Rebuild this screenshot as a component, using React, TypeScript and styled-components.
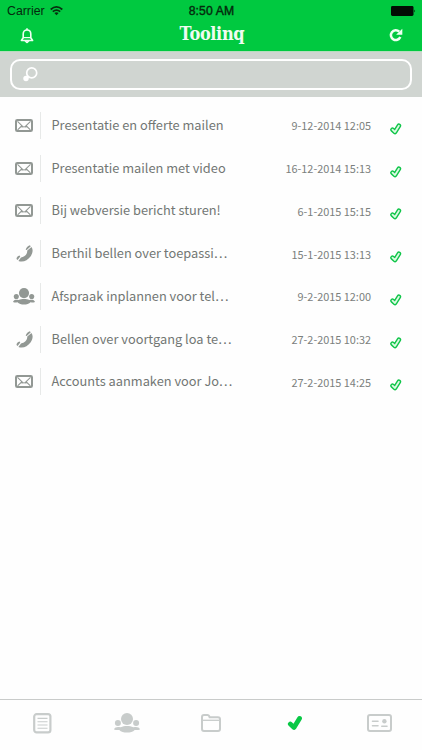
import React from "react";
import styled, { createGlobalStyle } from "styled-components";

const GREEN = "#00c940";
const GREY = "#929894";
const FAINT = "#c8cccb";

const GlobalStyle = createGlobalStyle`
  * { box-sizing: border-box; }
  body { margin: 0; background: #fefefe; }
`;

const Screen = styled.div`
  display: flex;
  flex-direction: column;
  width: 422px;
  height: 750px;
  overflow: hidden;
  background: #fefefe;
  font-family: "Noto Sans CJK JP", "Noto Sans", sans-serif;
  svg { display: block; flex: none; }
`;

const Header = styled.header`
  height: 51px;
  flex: none;
  background: ${GREEN};
`;

const StatusBar = styled.div`
  display: grid;
  grid-template-columns: 1fr auto 1fr;
  align-items: center;
  height: 22px;
  padding: 0 6px 0 7px;
  font: 12.3px/22px "Liberation Sans", sans-serif;
  color: #042a0d;
`;

const Carrier = styled.div`
  display: flex;
  align-items: center;
  gap: 6px;
`;

const CarrierName = styled.span`
  width: 37px;
  white-space: nowrap;
`;

const Clock = styled.span`
  font-size: 12.2px;
  -webkit-text-stroke: 0.4px #042a0d;
  letter-spacing: 0.12px;
`;

const BatterySlot = styled.div`
  justify-self: end;
`;

const TitleBar = styled.div`
  display: grid;
  grid-template-columns: 1fr auto 1fr;
  height: 29px;
  padding: 0 19px 0 20px;
`;

const HeaderAction = styled.button<{ $end?: boolean }>`
  justify-self: ${(p) => (p.$end ? "end" : "start")};
  align-self: start;
  padding: 6px 0 0;
  border: 0;
  background: none;
`;

const Title = styled.h1`
  margin: 0;
  color: #effcf1;
  font: 700 18px/23px "DejaVu Serif", serif;
  letter-spacing: -0.4px;
  transform: scaleX(0.9);
`;

const SearchArea = styled.div`
  height: 46px;
  flex: none;
  padding: 7px 10px 8px;
  border-top: 1px solid #b5ddbd;
  background: #d0d5d1;
`;

const SearchField = styled.label`
  display: flex;
  align-items: center;
  height: 31px;
  padding-left: 11px;
  border: 2px solid #fff;
  border-radius: 10px;
`;

const List = styled.ul`
  flex: 1;
  margin: 0;
  padding: 7px 0 0;
  list-style: none;
`;

const Row = styled.li`
  display: grid;
  grid-template-columns: 40px 11.5px 190px 129.5px 1fr;
  align-items: center;
  height: 42.75px;
`;

const KindSlot = styled.div`
  display: flex;
  justify-content: center;
  padding-left: 8px;
`;

const Divider = styled.span`
  width: 1px;
  height: 27px;
  background: #e7e9e8;
`;

const Task = styled.span`
  padding-bottom: 1px;
  color: #727774;
  font-size: 12.8px;
  line-height: 20px;
  white-space: nowrap;
`;

const When = styled.time`
  justify-self: end;
  color: #7b807d;
  font-size: 10.9px;
  line-height: 20px;
  white-space: nowrap;
`;

const DoneSlot = styled.div`
  padding: 7px 0 0 19px;
`;

const TabBar = styled.nav`
  display: grid;
  grid-template-columns: repeat(5, 1fr);
  flex: none;
  height: 51px;
  border-top: 1px solid #c9cbca;
`;

const Tab = styled.button`
  display: flex;
  align-items: center;
  justify-content: center;
  padding: 0 0 4px;
  border: 0;
  background: none;
`;

const Wifi = () => (
  <svg width="13" height="10" viewBox="0 0 13 10" fill="none" stroke="#06300f" strokeWidth="1.7">
    <path d="M.7 3.5Q6.5-1.6 12.3 3.5M2.8 5.6Q6.5 2.5 10.2 5.6" />
    <path d="M4.4 7.1Q6.5 5.5 8.6 7.1L6.5 9.3Z" fill="#06300f" stroke="none" />
  </svg>
);

const Battery = () => (
  <svg width="25" height="10" viewBox="0 0 25 10" fill="#020d04">
    <rect width="22.5" height="10" rx="1.4" />
    <path d="M23.3 3.4Q25 5 23.3 6.6Z" />
  </svg>
);

const Bell = () => (
  <svg width="14" height="16" viewBox="0 0 14 16" fill="none" stroke="#edfff1" strokeWidth="1.6">
    <path d="M3.2 9.8V6C3.2 3.4 4.8 2 7 2S10.8 3.4 10.8 6V9.8L12.6 12.5H1.4Z" strokeLinejoin="round" />
    <path d="M3 9.6H11" strokeWidth="1.2" />
    <path d="M5 13.2Q7 16.4 9 13.2Z" fill="#edfff1" strokeWidth="1" />
    <path d="M7 .2V2" />
  </svg>
);

const Reload = () => (
  <svg width="14" height="14" viewBox="0 0 14 14" fill="none" stroke="#edfff1" strokeWidth="2.5">
    <path d="M10.2 3.6A4.9 4.9 0 1 0 11.3 9" />
    <path d="M13.3 .8V6.8H7.1Z" fill="#edfff1" stroke="none" />
  </svg>
);

const SearchIcon = () => (
  <svg width="15" height="15" viewBox="0 0 15 15" fill="none" stroke="#fff">
    <circle cx="8.7" cy="5.9" r="5" strokeWidth="1.7" />
    <path d="M4.9 9.5L3 11.5" strokeWidth="3" />
    <circle cx="3" cy="11.5" r="2.7" fill="#fff" stroke="none" />
  </svg>
);

const Mail = () => (
  <svg width="18" height="13" viewBox="0 0 18 13" fill="none" stroke={GREY}>
    <rect x="1" y="1" width="16" height="11" rx="1.3" strokeWidth="2" />
    <path d="M2.5 2.4L7.6 7.4Q9 8.5 10.4 7.4L15.5 2.4M2.6 10.8L6.3 7.3L7.5 8.3M15.4 10.8L11.7 7.3L10.5 8.3" strokeWidth="1.1" />
  </svg>
);

const Phone = () => (
  <svg width="17" height="17" viewBox="0 0 17 17" fill={GREY}>
    <path d="M11.3 5.6L15.5 1.9C17.3 4.4 16.9 8.2 14.5 11.5C11.5 15.6 7 17.6 2.4 16L5 12.4C8.5 12.1 11.3 9.6 11.3 5.6Z" />
    <path d="M9.7 4.8Q10.5 1.2 13.8.2L14.8 1.2L10.7 4.9ZM.5 14Q.6 11.2 3.6 10.5L4.3 11.4L1.6 15Z" />
  </svg>
);

const People = ({ color, width }: { color: string; width: number }) => (
  <svg width={width} height={width * 0.77} viewBox="0 0 26 20" fill={color}>
    <circle cx="13" cy="6" r="6" />
    <circle cx="3.9" cy="10.1" r="3" />
    <circle cx="22.1" cy="10.1" r="3" />
    <path d="M0 16.4C.6 14.3 3 13.7 5 14L6.8 14.3C10 12.6 16 12.6 19.2 14.3L21 14C23 13.7 25.4 14.3 26 16.4Q23.5 17.3 20.7 16.9C17.5 20.5 8.5 20.5 5.3 16.9Q2.5 17.3 0 16.4Z" />
  </svg>
);

const Done = () => (
  <svg width="12" height="12" viewBox="0 0 12 12">
    <path d="M2.5 6.7L5 9L8.9 2.7" fill="none" stroke="#10c549" strokeWidth="4.6" strokeLinecap="round" strokeLinejoin="round" />
    <path d="M2.5 6.7L5 9L8.9 2.7" fill="none" stroke="#dcfae3" strokeWidth="1.8" strokeLinecap="round" strokeLinejoin="round" />
  </svg>
);

const Notes = () => (
  <svg width="19" height="21" viewBox="0 0 19 21" fill="none" stroke={FAINT}>
    <rect x="1.2" y="1.2" width="16.2" height="18.2" rx="2.4" strokeWidth="2.2" />
    <path d="M4.5 5.4H14.5M4.5 8.7H14.5M4.5 12H14.5M4.5 15.3H14.5" strokeWidth="1.1" />
  </svg>
);

const Folder = () => (
  <svg width="20" height="18" viewBox="0 0 20 18" fill="none" stroke={FAINT}>
    <path d="M1 3Q1 1 3 1H6.5Q7.7 1 8.2 2.2L8.6 3.3H17Q19 3.3 19 5.3V15Q19 17 17 17H3Q1 17 1 15Z" strokeWidth="2" />
    <path d="M2 6.3H18" strokeWidth="1.3" />
  </svg>
);

const Check = () => (
  <svg width="16" height="16" viewBox="0 0 16 16" fill="none" stroke="#09c845" strokeWidth="4.8" strokeLinecap="round" strokeLinejoin="round">
    <path d="M3.3 9L7 12.4L12.5 3.4" />
  </svg>
);

const Card = () => (
  <svg width="25" height="18" viewBox="0 0 25 18" fill="none" stroke={FAINT}>
    <rect x="1" y="1" width="23" height="16" rx="2" strokeWidth="2" />
    <path d="M5.5 7.2H11M5.5 11.8H11M14.8 12.2H20" strokeWidth="1.6" strokeLinecap="round" />
    <circle cx="17.4" cy="7.2" r="2.2" fill={FAINT} stroke="none" />
  </svg>
);

type Kind = "mail" | "phone" | "people";

const tasks: { kind: Kind; text: string; when: string }[] = [
  { kind: "mail", text: "Presentatie en offerte mailen", when: "9-12-2014 12:05" },
  { kind: "mail", text: "Presentatie mailen met video", when: "16-12-2014 15:13" },
  { kind: "mail", text: "Bij webversie bericht sturen!", when: "6-1-2015 15:15" },
  { kind: "phone", text: "Berthil bellen over toepassi…", when: "15-1-2015 13:13" },
  { kind: "people", text: "Afspraak inplannen voor tel…", when: "9-2-2015 12:00" },
  { kind: "phone", text: "Bellen over voortgang loa te…", when: "27-2-2015 10:32" },
  { kind: "mail", text: "Accounts aanmaken voor Jo…", when: "27-2-2015 14:25" },
];

const KindIcon = ({ kind }: { kind: Kind }) =>
  kind === "mail" ? <Mail /> : kind === "phone" ? <Phone /> : <People color={GREY} width={22} />;

export default function App() {
  return (
    <Screen>
      <GlobalStyle />
      <Header>
        <StatusBar>
          <Carrier><CarrierName>Carrier</CarrierName><Wifi /></Carrier>
          <Clock>8:50 AM</Clock>
          <BatterySlot><Battery /></BatterySlot>
        </StatusBar>
        <TitleBar>
          <HeaderAction aria-label="Notifications"><Bell /></HeaderAction>
          <Title>Toolinq</Title>
          <HeaderAction $end aria-label="Refresh"><Reload /></HeaderAction>
        </TitleBar>
      </Header>
      <SearchArea>
        <SearchField><SearchIcon /></SearchField>
      </SearchArea>
      <List>
        {tasks.map((t) => (
          <Row key={t.text}>
            <KindSlot><KindIcon kind={t.kind} /></KindSlot>
            <Divider />
            <Task>{t.text}</Task>
            <When>{t.when}</When>
            <DoneSlot><Done /></DoneSlot>
          </Row>
        ))}
      </List>
      <TabBar>
        <Tab aria-label="Notes"><Notes /></Tab>
        <Tab aria-label="Contacts"><People color={FAINT} width={26} /></Tab>
        <Tab aria-label="Files"><Folder /></Tab>
        <Tab aria-label="Tasks"><Check /></Tab>
        <Tab aria-label="Card"><Card /></Tab>
      </TabBar>
    </Screen>
  );
}
